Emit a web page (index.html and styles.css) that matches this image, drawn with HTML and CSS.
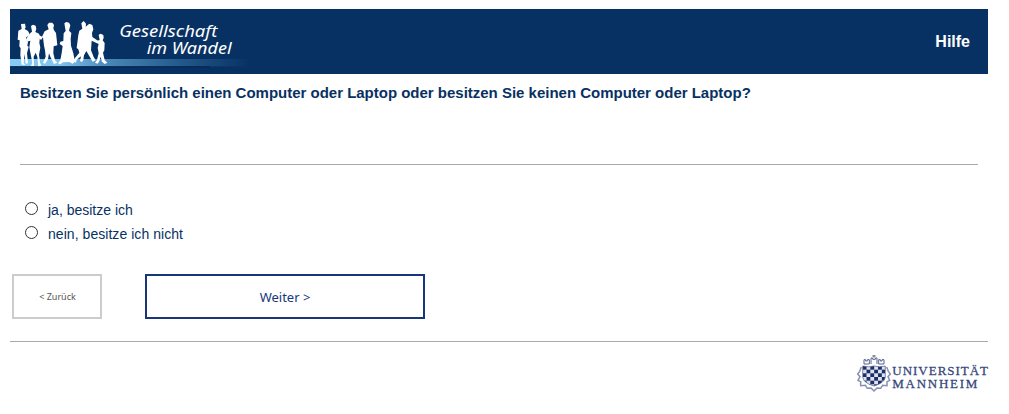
FILE: index.html
```html
<!DOCTYPE html>
<html lang="de">
<head>
<meta charset="utf-8">
<title>Gesellschaft im Wandel</title>
<link rel="stylesheet" href="styles.css">
</head>
<body>
<div class="page">
  <header class="header">
    <svg class="brand" viewBox="30 27 750 195" role="img" aria-label="Gesellschaft im Wandel">
      <defs>
        <linearGradient id="band" x1="0" x2="1" y1="0" y2="0">
          <stop offset="0" stop-color="#85cdf5"/>
          <stop offset=".2" stop-color="#80c5ed"/>
          <stop offset=".42" stop-color="#4886b5"/>
          <stop offset=".7" stop-color="#245b8c"/>
          <stop offset="1" stop-color="#083163"/>
        </linearGradient>
      </defs>
      <rect x="30" y="177" width="720" height="22" fill="url(#band)"/>
      <rect x="30" y="199" width="600" height="3" fill="#05254f"/>
      <g fill="#fff">
        <path d="M63 72L75 71L77 82L74 87L84 93L89 103L85 109L79 111L78 119L84 125L82 138L86 140L81 160L84 190L77 191L73 162L71 190L77 194L65 194L61 165L62 145L58 139L59 121L53 119L55 92L65 87Z"/>
        <path d="M93 78L99 74L107 77L109 86L106 96L117 101L120 111L118 128L121 143L117 164L120 188L124 197L115 199L112 171L107 158L101 170L102 198L93 198L97 188L92 163L88 142L91 122L80 125L78 118L91 99L96 95Z"/>
        <path d="M142 75L147 68L157 68L162 75L160 85L162 91L168 99L172 136L161 139L160 160L165 181L172 188L162 192L151 170L147 160L144 178L135 191L129 188L137 170L135 151L132 137L129 112L123 120L115 112L118 106L126 110L134 94L146 88Z"/>
        <path d="M193 70L199 66L207 68L211 76L207 92L214 99L212 116L213 137L220 160L225 185L218 191L208 186L189 187L181 193L174 190L181 181L185 159L188 138L179 132L181 125L190 123L191 100L197 93Z"/>
        <path d="M244 70L251 63L258 71L257 80L268 71L277 75L280 88L276 99L277 111L294 122L291 130L275 122L273 151L281 171L287 181L278 185L266 165L259 153L252 166L250 180L246 186L240 183L243 169L230 179L228 188L221 183L225 174L238 158L235 148L230 144L235 105L238 92L247 86Z"/>
        <path d="M296 104L302 101L310 105L311 114L308 121L314 129L313 151L309 158L314 180L322 188L314 192L306 185L302 170L298 184L293 191L285 188L291 180L296 160L293 143L296 132L290 129L292 122L299 120Z"/>
      </g>
      <text class="brand-text" x="358" y="110" textLength="294" lengthAdjust="spacingAndGlyphs">Gesellschaft</text>
      <text class="brand-text" x="440" y="161" textLength="255" lengthAdjust="spacingAndGlyphs">im Wandel</text>
    </svg>
    <a class="help">Hilfe</a>
  </header>
  <main>
    <h1 class="question">Besitzen Sie persönlich einen Computer oder Laptop oder besitzen Sie keinen Computer oder Laptop?</h1>
    <div class="options">
      <label class="option"><input class="radio" type="radio" name="computer"><span>ja, besitze ich</span></label>
      <label class="option"><input class="radio" type="radio" name="computer"><span class="wide">nein, besitze ich nicht</span></label>
    </div>
    <div class="buttons">
      <button class="button back">&lt; Zurück</button>
      <button class="button next">Weiter &gt;</button>
    </div>
  </main>
  <footer class="footer">
    <svg class="university" viewBox="33 27 402 117" role="img" aria-label="Universität Mannheim">
      <defs>
        <clipPath id="shield"><path d="M53 63Q71 68 87 63Q103 68 121 63V96Q119 114 87 123Q55 114 53 96Z"/></clipPath>
        <pattern id="check" x="53" y="63" width="23" height="22" patternUnits="userSpaceOnUse">
          <rect width="23" height="22" fill="#dde1eb"/><rect width="11.5" height="11" fill="#1c2f69"/><rect x="11.5" y="11" width="11.5" height="11" fill="#1c2f69"/>
        </pattern>
      </defs>
      <g fill="none" stroke="#8591b2" stroke-width="4.5">
        <path d="M49 66L44 79L38 87L45 95L39 106L47 110L47 122L61 121L67 130L78 129L87 138L96 129L107 130L113 121L126 122L126 110L134 106L129 95L136 87L130 79L125 66"/>
        <path d="M57 57V44H62V48H67V44H73V57ZM101 57V44H106V48H111V44H117V57ZM78 57V39H83V43H91V39H96V57M87 38V30M82 33H92" stroke="#566590" stroke-width="3"/>
      </g>
      <rect x="53" y="63" width="69" height="60" fill="url(#check)" clip-path="url(#shield)"/>
      <path d="M53 63Q71 68 87 63Q103 68 121 63V96Q119 114 87 123Q55 114 53 96Z" fill="none" stroke="#465685" stroke-width="2"/>
      <text class="university-text" x="142" y="90" textLength="287">UNIVERSITÄT</text>
      <text class="university-text" x="142" y="128" textLength="255">MANNHEIM</text>
    </svg>
  </footer>
</div>
</body>
</html>
```
FILE: styles.css
```css
body {
  margin: 0;
  background: #fff;
  color: #083163;
  font-family: "Liberation Sans", Arial, sans-serif;
}
.page {
  width: 978px;
  padding: 9px 0 0 10px;
}
.header {
  display: flex;
  justify-content: space-between;
  height: 65px;
  background: #083163;
}
.brand {
  width: 250px;
  height: 65px;
}
.brand-text {
  fill: #fff;
  font: italic 48px "Noto Sans", sans-serif;
}
.help {
  padding: 23px 18px 0 0;
  color: #fff;
  font-size: 16px;
  font-weight: bold;
  line-height: 19px;
}
.question {
  box-sizing: border-box;
  height: 91px;
  margin: 0 10px;
  padding-top: 10px;
  border-bottom: 1px solid #aaa;
  font-size: 15px;
  letter-spacing: -0.01px;
  line-height: 18px;
  white-space: nowrap;
}
.options {
  padding: 33px 0 0 15px;
}
.option {
  display: flex;
  gap: 10px;
  height: 24px;
  font-size: 14px;
  line-height: 24px;
}
.wide {
  letter-spacing: 0.05px;
}
.radio {
  appearance: none;
  box-sizing: border-box;
  width: 13px;
  height: 13px;
  margin: 4px 0 0;
  border: 1px solid #333;
  border-radius: 50%;
  background: #fff;
}
.buttons {
  display: flex;
  gap: 43px;
  padding: 28px 0 0 2px;
}
.button {
  box-sizing: border-box;
  height: 45px;
  padding: 0;
  background: #fff;
  font-family: "Noto Sans", sans-serif;
}
.back {
  width: 90px;
  padding-left: 1px;
  border: 2px solid #ccc;
  color: #555;
  font-size: 9px;
}
.next {
  width: 280px;
  border: 2px solid #17377a;
  color: #17377a;
  font-size: 13px;
}
.footer {
  display: flex;
  justify-content: flex-end;
  margin-top: 22px;
  padding-top: 12px;
  border-top: 1px solid #aaa;
}
.university {
  width: 134px;
  height: 39px;
  margin-right: -2px;
}
.university-text {
  fill: #34457a;
  stroke: #34457a;
  stroke-width: 0.8px;
  font: 39px "Liberation Serif", serif;
}
```
